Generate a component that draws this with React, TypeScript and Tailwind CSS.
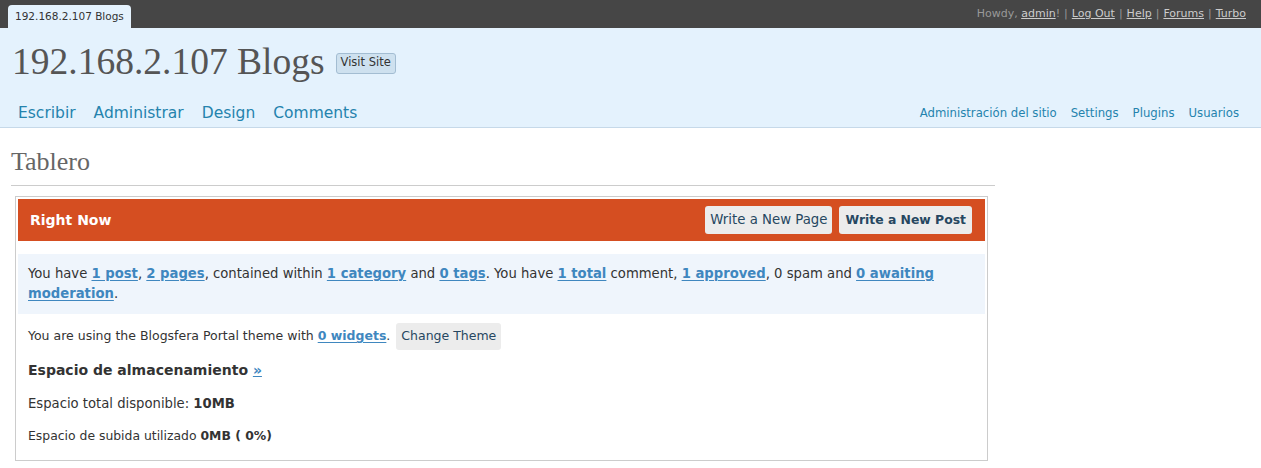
import React from "react";

const sans = { fontFamily: '"DejaVu Sans", "Lucida Grande", Verdana, sans-serif' };
const serif = { fontFamily: '"Liberation Serif", "Times New Roman", serif' };

function L({ children }: { children: React.ReactNode }) {
  return <a className="font-bold text-[#3f87bf] underline underline-offset-2">{children}</a>;
}

export default function App() {
  return (
    <div className="w-[1261px] h-[468px] bg-white overflow-hidden text-[#333]" style={sans}>
      {/* top bar */}
      <div className="h-[28px] bg-[#464646] flex items-end justify-between pl-[8px] pr-[15px]">
        <div className="h-[23px] px-[7px] bg-[#e4f2fd] rounded-t-[4px] text-[10.5px] text-[#333] flex items-center">
          192.168.2.107 Blogs
        </div>
        <div className="self-center text-[11px] text-[#999] flex items-center gap-[4px]">
          <span>Howdy, <a className="underline text-[#ccc]">admin</a>!</span>
          <span>|</span>
          <a className="underline text-[#ccc]">Log Out</a>
          <span>|</span>
          <a className="underline text-[#ccc]">Help</a>
          <span>|</span>
          <a className="underline text-[#ccc]">Forums</a>
          <span>|</span>
          <a className="underline text-[#ccc]">Turbo</a>
        </div>
      </div>
      {/* header */}
      <div className="h-[100px] bg-[#e4f2fd] border-b border-[#c6d9e9] flex flex-col">
        <div className="flex items-center pl-[12px] pt-[8px] h-[60px]">
          <h1 className="text-[37.5px] leading-none text-[#555]" style={serif}>192.168.2.107 Blogs</h1>
          <span className="ml-[11px] mt-[2px] px-[4px] h-[21px] flex items-center text-[11.5px] text-[#333] bg-[#cee1ef] border border-[#a3bdd2] rounded-[3px]">
            Visit Site
          </span>
        </div>
        <div className="flex items-center justify-between pl-[18px] pr-[22px] mt-[14px]">
          <div className="flex gap-[18px] text-[15.5px] text-[#2583ad]">
            <a>Escribir</a>
            <a>Administrar</a>
            <a>Design</a>
            <a>Comments</a>
          </div>
          <div className="flex gap-[14px] text-[11.7px] text-[#2583ad]">
            <a>Administración del sitio</a>
            <a>Settings</a>
            <a>Plugins</a>
            <a>Usuarios</a>
          </div>
        </div>
      </div>
      {/* body */}
      <div className="pl-[11px] w-[995px]">
        <h2 className="text-[26px] text-[#666] pt-[20px] pb-[9px] border-b border-[#ccc] leading-[28px]" style={serif}>
          Tablero
        </h2>
        <div className="mt-[10px] ml-[4px] w-[973px] border border-[#ccc] p-[2px]">
          <div className="h-[42px] bg-[#d54e21] flex items-center justify-between pl-[12px] pr-[13px]">
            <span className="text-white font-bold text-[14px]">Right Now</span>
            <div className="flex gap-[7px]">
              <span className="h-[28px] px-[5px] flex items-center bg-[#ececec] rounded-[3px] text-[13.3px] text-[#264761]">Write a New Page</span>
              <span className="h-[28px] px-[6px] flex items-center bg-[#ececec] rounded-[3px] text-[12.4px] font-bold text-[#264761]">Write a New Post</span>
            </div>
          </div>
          <div className="mt-[13px] bg-[#eff5fc] px-[10px] py-[10px] text-[13.2px] leading-[20px] text-[#333]">
            You have <L>1 post</L>, <L>2 pages</L>, contained within <L>1 category</L> and <L>0 tags</L>. You have <L>1 total</L> comment, <L>1 approved</L>, 0 spam and <L>0 awaiting moderation</L>.
          </div>
          <div className="px-[10px] pt-[9px] pb-[13px] text-[12.5px] text-[#333]">
            <div className="flex items-center">
              <span>You are using the Blogsfera Portal theme with <L>0 widgets</L>.</span>
              <span className="ml-[6px] h-[27px] px-[5px] flex items-center bg-[#ececec] rounded-[3px] text-[12.5px] text-[#264761]">Change Theme</span>
            </div>
            <div className="mt-[10px] text-[14px] font-bold">
              Espacio de almacenamiento <a className="text-[#3f87bf] underline">»</a>
            </div>
            <div className="mt-[13px] text-[13.2px]">Espacio total disponible: <b>10MB</b></div>
            <div className="mt-[13px] text-[12.4px]">Espacio de subida utilizado <b>0MB ( 0%)</b></div>
          </div>
        </div>
      </div>
    </div>
  );
}
